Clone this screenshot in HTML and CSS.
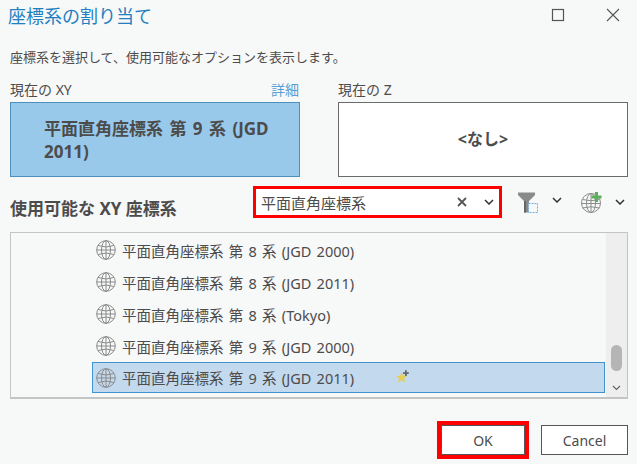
FILE: index.html
```html
<!DOCTYPE html>
<html lang="ja">
<head>
  <meta charset="UTF-8">
  <title>座標系の割り当て</title>
  <link rel="stylesheet" href="styles.css">
</head>
<body>
  <div class="dialog">
    <div class="title-bar">
      <h1>座標系の割り当て</h1>
      <div class="window-buttons">
        <svg width="14" height="14" viewBox="0 0 14 14"><rect x="1.5" y="1.5" width="11" height="11" fill="none" stroke="#555" stroke-width="1.2"/></svg>
        <svg width="14" height="14" viewBox="0 0 14 14"><path d="M1 1L13 13M13 1L1 13" stroke="#555" stroke-width="1.1"/></svg>
      </div>
    </div>

    <p class="intro">座標系を選択して、使用可能なオプションを表示します。</p>

    <div class="current">
      <div class="current-col">
        <div class="current-label"><span>現在の XY</span><a class="details">詳細</a></div>
        <div class="current-box selected">平面直角座標系 第 9 系 (JGD 2011)</div>
      </div>
      <div class="current-col">
        <div class="current-label"><span>現在の Z</span></div>
        <div class="current-box empty">&lt;なし&gt;</div>
      </div>
    </div>

    <div class="available">
      <h2>使用可能な XY 座標系</h2>
      <div class="search">
        <span class="search-text">平面直角座標系</span>
        <svg class="clear" width="10" height="10" viewBox="0 0 10 10"><path d="M1 1L9 9M9 1L1 9" stroke="#555" stroke-width="1.8"/></svg>
        <svg class="chev" width="10" height="6" viewBox="0 0 10 6"><path d="M1 1L5 5L9 1" fill="none" stroke="#333" stroke-width="1.5"/></svg>
      </div>
      <div class="tools">
        <svg class="tool-filter" width="21" height="21" viewBox="0 0 21 21">
          <path d="M0 0.500H17V3L11 9V20.500H6V9L0 3Z" fill="#8a8a8a"/>
          <path d="M6 9V20.500H8V9Z" fill="#666"/>
          <rect x="10.500" y="11.500" width="9" height="9" fill="#f7f8f8" stroke="#6fb0e0" stroke-dasharray="2 1"/>
        </svg>
        <svg class="chev chev-filter" width="10" height="6" viewBox="0 0 10 6"><path d="M1 1L5 5L9 1" fill="none" stroke="#333" stroke-width="1.5"/></svg>
        <svg class="tool-globe" width="21" height="21" viewBox="0 0 21 21">
          <g fill="none" stroke="#8c8c8c" stroke-width="1">
            <circle cx="10" cy="11" r="9.500"/>
            <ellipse cx="10" cy="11" rx="4.500" ry="9.500"/>
            <path d="M10 1.500V20.500M1.500 7.500Q10 10 18.500 7.500M0.500 11.500H19.500M1.500 16Q10 13.500 18.500 16"/>
          </g>
          <path d="M10.500 3.500H14V0H17V3.500H20.500V6.500H17V10H14V6.500H10.500Z" fill="#5cad5c"/>
        </svg>
        <svg class="chev" width="10" height="6" viewBox="0 0 10 6"><path d="M1 1L5 5L9 1" fill="none" stroke="#333" stroke-width="1.5"/></svg>
      </div>
    </div>

    <div class="list">
      <ul class="rows">
        <li class="row"><svg class="globe" width="20" height="20"><use href="#globe"/></svg>平面直角座標系 第 8 系 (JGD 2000)</li>
        <li class="row"><svg class="globe" width="20" height="20"><use href="#globe"/></svg>平面直角座標系 第 8 系 (JGD 2011)</li>
        <li class="row"><svg class="globe" width="20" height="20"><use href="#globe"/></svg>平面直角座標系 第 8 系 (Tokyo)</li>
        <li class="row"><svg class="globe" width="20" height="20"><use href="#globe"/></svg>平面直角座標系 第 9 系 (JGD 2000)</li>
        <li class="row active"><svg class="globe" width="20" height="20"><use href="#globe"/></svg><span class="row-name">平面直角座標系 第 9 系 (JGD 2011)</span>
          <svg class="star" width="13" height="13" viewBox="0 0 13 13">
            <path d="M5.500 2L7 5.800L11 6L8 8.500L9 12.500L5.500 10.300L2 12.500L3 8.500L0 6L4 5.800Z" fill="#e6cf55"/>
            <path d="M7 2.200H9V0.200H10.800V2.200H12.800V4H10.800V6H9V4H7Z" fill="#666"/>
          </svg>
        </li>
      </ul>
      <div class="scrollbar">
        <div class="thumb"></div>
        <svg width="9" height="6" viewBox="0 0 9 6"><path d="M1 1L4.500 4.500L8 1" fill="none" stroke="#666" stroke-width="1.200"/></svg>
      </div>
    </div>

    <div class="actions">
      <button class="btn btn-ok">OK</button>
      <button class="btn">Cancel</button>
    </div>
  </div>

  <svg width="0" height="0" class="defs">
    <symbol id="globe" viewBox="0 0 20 20">
      <g fill="none" stroke="#8a8a8a" stroke-width="1">
        <circle cx="10" cy="10" r="9.300"/>
        <ellipse cx="10" cy="10" rx="4.500" ry="9.300"/>
        <path d="M10 1V19M2 5.500Q10 8.500 18 5.500M0.700 10H19.300M2 14.500Q10 11.500 18 14.500"/>
      </g>
    </symbol>
  </svg>
</body>
</html>
```

FILE: styles.css
```css
* {
  box-sizing: border-box;
}
body {
  margin: 0;
  background-color: #f7f8f8;
  font-family: "Noto Sans", "Noto Sans CJK JP", sans-serif;
  color: #4c4c4c;
  overflow: hidden;
}
.defs {
  display: block;
}
.dialog {
  width: 637px;
  height: 464px;
  padding: 0 9px 0 10px;
  display: flex;
  flex-direction: column;
}
.title-bar {
  height: 30px;
  margin-left: -2px;
  display: flex;
  align-items: center;
  justify-content: space-between;
}
.title-bar h1 {
  margin: 0;
  font-size: 18px;
  font-weight: 400;
  color: #1f7fc0;
}
.window-buttons {
  display: flex;
  gap: 41px;
  margin-right: 8px;
}
.intro {
  margin: 17px 0 0;
  font-size: 13px;
  line-height: 20px;
}
.current {
  margin-top: 12px;
  display: flex;
  justify-content: space-between;
}
.current-col {
  width: 290px;
}
.current-label {
  height: 23px;
  display: flex;
  justify-content: space-between;
  font-size: 14px;
  line-height: 21px;
}
.details {
  margin-right: 1px;
  color: #5a9fd4;
}
.current-box {
  height: 75px;
  font-size: 17px;
  font-weight: 700;
  line-height: 23px;
  word-spacing: 2px;
  display: flex;
  align-items: center;
}
.current-box.selected {
  padding: 0 30px 0 33px;
  background-color: #99c9ea;
  border: 1px solid #4d8fbd;
}
.current-box.empty {
  justify-content: center;
  font-size: 16px;
  background-color: #fff;
  border: 1px solid #6b6b6b;
}
.available {
  margin-top: 9px;
  height: 32px;
  display: flex;
  align-items: center;
}
.available h2 {
  margin: 10px 0 0;
  width: 243px;
  font-size: 17px;
  font-weight: 700;
  white-space: nowrap;
}
.search {
  width: 249px;
  height: 32px;
  padding: 0 5px;
  background-color: #fff;
  border: 3px solid #f00;
  display: flex;
  align-items: center;
  font-size: 15px;
}
.search-text {
  flex: 1;
}
.clear {
  margin-right: 17px;
}
.tools {
  margin-left: 16px;
  display: flex;
  align-items: center;
}
.tool-globe {
  margin-left: 19px;
}
.tools .chev {
  margin-left: 13px;
}
.tools .chev-filter {
  margin-top: -4px;
}
.list {
  margin-top: 14px;
  height: 167px;
  border: 1px solid #c4c4c4;
  border-width: 1px 1px 2px 1px;
  display: flex;
  justify-content: flex-end;
  overflow: hidden;
}
.rows {
  flex: 1;
  margin: 0 1px 0 0;
  padding: 1px 0 0 81px;
  list-style: none;
}
.row {
  height: 32px;
  padding-left: 4px;
  display: flex;
  align-items: center;
  gap: 6px;
  font-size: 14.5px;
  word-spacing: 1.5px;
}
.row.active {
  height: 31px;
  background-color: #c3d9ee;
  border: 1px solid #3f94d0;
  padding-left: 3px;
}
.row-name {
  width: 268px;
}
.star {
  margin-top: -3px;
}
.scrollbar {
  width: 21px;
  background-color: #eeeeee;
  display: flex;
  flex-direction: column;
  align-items: center;
  justify-content: flex-end;
  padding-bottom: 6px;
}
.thumb {
  width: 11px;
  height: 26px;
  margin-bottom: 14px;
  border-radius: 6px;
  background-color: #b5b5b5;
}
.actions {
  margin-top: 26px;
  display: flex;
  justify-content: flex-end;
  align-items: center;
  gap: 16px;
}
.btn {
  width: 87px;
  height: 30px;
  padding: 0;
  font-family: inherit;
  font-size: 14px;
  color: #4c4c4c;
  background-color: #fff;
  border: 1px solid #555;
}
.btn-ok {
  width: 84px;
  box-shadow: 0 0 0 4px #f00;
}
```
